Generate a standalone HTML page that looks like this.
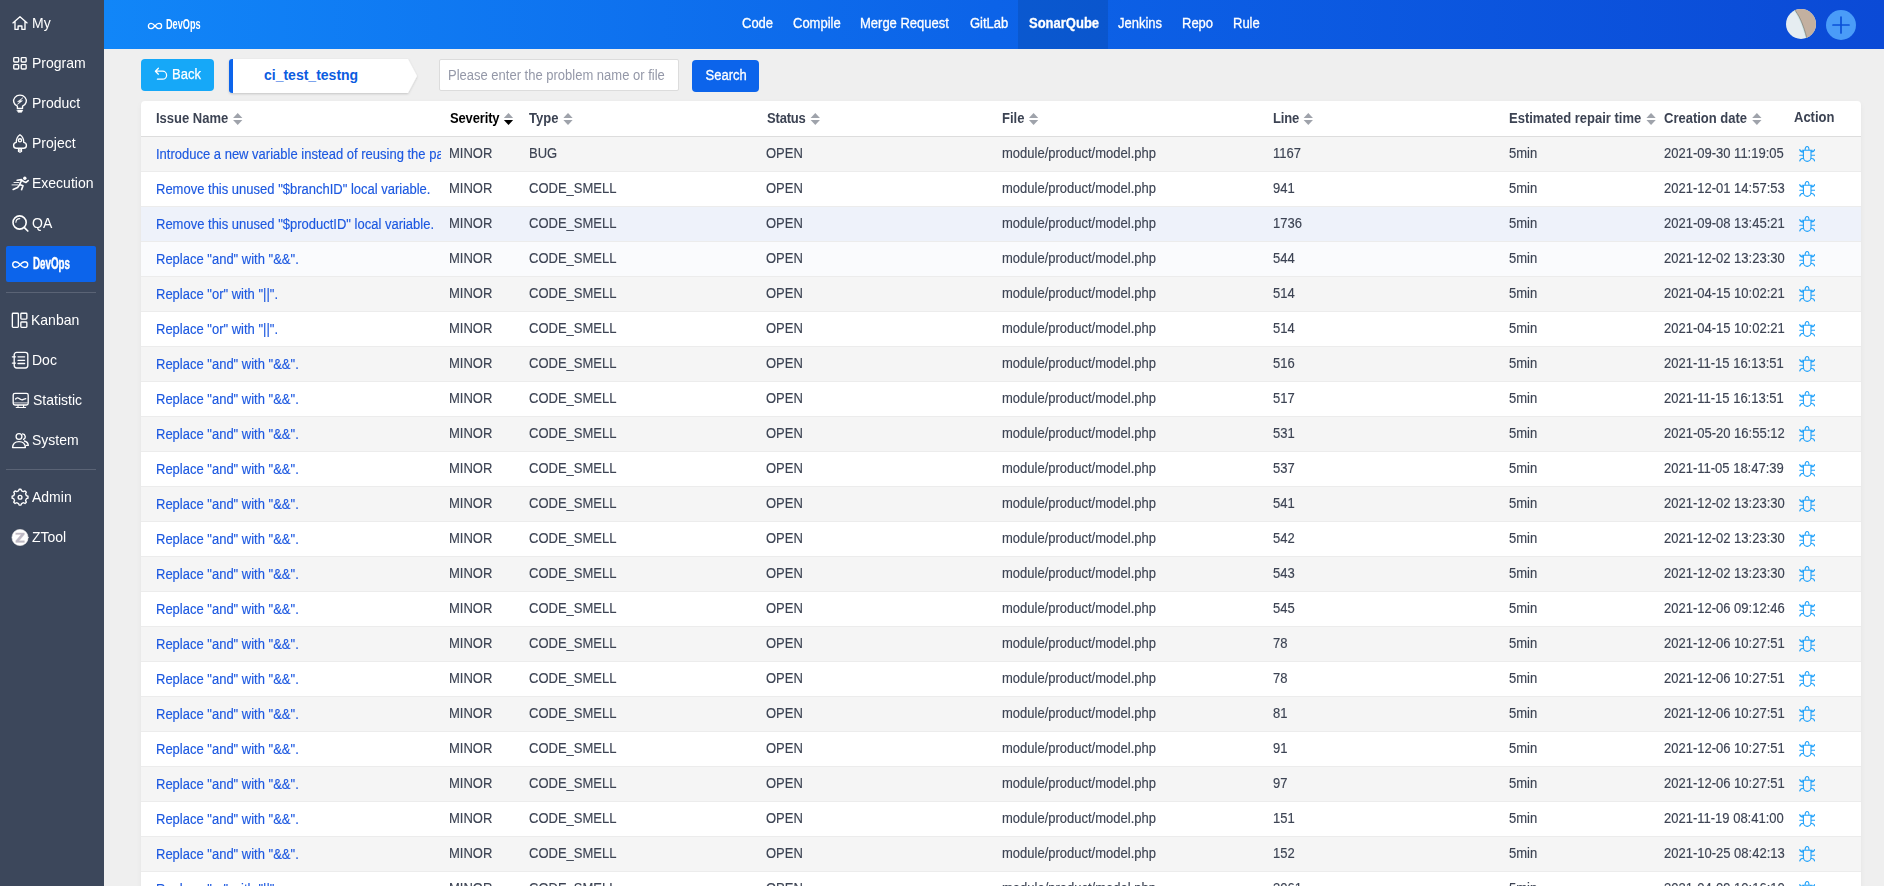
<!DOCTYPE html>
<html><head><meta charset="utf-8"><title>SonarQube issues</title>
<style>
*{box-sizing:border-box;margin:0;padding:0}
html,body{width:1884px;height:886px;overflow:hidden;background:#efefef;font-family:"Liberation Sans",sans-serif;font-size:13px;color:#3c4353}
#side{position:absolute;left:0;top:0;width:104px;height:886px;background:#3c475b}
#side .m{position:absolute;left:6px;width:90px;height:36px;color:#fff;font-size:14px;line-height:36px;border-radius:2px}
#side .m svg{position:absolute;left:5px;top:8px;width:18px;height:20px;fill:none;stroke:#fff;stroke-width:1.35;stroke-linecap:round;stroke-linejoin:round}
#side .m span{position:absolute;left:26px;top:0;white-space:nowrap;font-size:15px;transform:scaleX(.9333);transform-origin:0 50%}
#side .m.act{background:#0c64eb}
#side .dv{position:absolute;left:6px;width:90px;height:1px;background:#5a6375}
#top{position:absolute;left:104px;top:0;width:1780px;height:49px;background:linear-gradient(90deg,#1186f8 0%,#0c63e8 50%,#0b4ad6 100%)}
#top .nav{position:absolute;top:0;height:48px;line-height:47px;color:#fff;font-size:14px;white-space:nowrap;-webkit-text-stroke:0.3px #fff;transform:scaleX(.9286);transform-origin:0 50%}
#top .nav.on{font-weight:bold}
#top .onbg{position:absolute;left:914px;top:0;width:90px;height:49px;background:rgba(0,0,0,0.10)}
.cond{display:inline-block;transform-origin:0 50%;font-weight:bold;-webkit-text-stroke:0}
#back{position:absolute;left:141px;top:59px;width:73px;height:32px;background:#16a8f8;border-radius:4px;color:#fff;font-size:13px;line-height:31px;-webkit-text-stroke:0.25px #fff}
#crumb{position:absolute;left:229px;top:59px;width:190px;height:34px}
#srch{position:absolute;left:439px;top:59px;width:240px;height:32px;background:#fff;border:1px solid #dcdcdc;border-radius:2px;color:#9498a8;font-size:13px;line-height:30px;padding-left:8px}
#sbtn{position:absolute;left:692px;top:60px;width:67px;height:32px;background:#0c64eb;border-radius:4px;color:#fff;font-size:13px;line-height:31px;text-align:center;-webkit-text-stroke:0.3px #fff}
#tbl{position:absolute;left:141px;top:101px;width:1720px;height:800px;background:#fff;border-radius:4px 4px 0 0;overflow:hidden;box-shadow:0 1px 1px rgba(0,0,0,.05),0 2px 6px rgba(0,0,0,.04)}
#th{position:absolute;left:0;top:0;width:1720px;height:36px;border-bottom:1px solid #ddd;font-weight:bold;color:#3c4353;font-size:13px;line-height:35px}
#th span{position:absolute;top:0;white-space:nowrap;font-size:14px;transform:scaleX(.9286);transform-origin:0 50%}
.r{position:absolute;left:0;width:1720px;height:35px;border-bottom:1px solid #ececec;line-height:34px;font-size:13px;color:#3c4353;background:#fff}
.r:nth-child(odd){background:#f5f5f5}
.r.hov{background:#eef2fa}
.r.hov2{background:#fafbfd}
.r span,.r a{position:absolute;top:-1px;white-space:nowrap;-webkit-text-stroke:0.15px;font-size:14px;transform:scaleX(.9286);transform-origin:0 50%}
.c1{left:15px;width:307px;overflow:hidden;color:#1c58e0;top:0 !important}
.c2{left:308px}.c3{left:388px}.c4{left:625px}.c5{left:861px}.c6{left:1132px}.c7{left:1368px}.c8{left:1523px}
.bug{position:absolute;left:1658px;top:8px;width:16px;height:17px;fill:none;stroke:#22a2fa;stroke-width:1.15;stroke-linecap:round}
.sort{display:inline-block;position:relative;width:10.4px;height:12px;margin-left:5.2px;vertical-align:-2px;letter-spacing:0}
.sort:before{content:"";position:absolute;left:0;top:-0.5px;border:5.2px solid transparent;border-top:0;border-bottom:5.5px solid #9fa3ab}
.sort:after{content:"";position:absolute;left:0;top:7px;border:5.2px solid transparent;border-bottom:0;border-top:5.5px solid #9fa3ab}
.sort.dn:after{border-top-color:#000}
</style></head><body>
<svg width="0" height="0" style="position:absolute"><defs>
<g id="bug"><path d="M6.1 4.7 A1.95 3.7 0 0 1 10 4.7 M3.1 4.7 H13.3 M4.4 4.7 V11.7 A3.8 4.1 0 0 0 12 11.7 V4.7 M0.8 4.1 Q1 6.2 4.4 6.6 M0.8 9.7 H4.4 M0.8 15.4 Q1 13.2 4.4 12.8 M15.6 4.1 Q15.4 6.2 12 6.6 M15.6 9.7 H12 M15.6 15.4 Q15.4 13.2 12 12.8"/></g>
</defs></svg>
<div id="side">
<div class="m" style="top:5px"><svg viewBox="0 0 18 20"><path d="M1.9 9.9 L9 3.7 L16.1 9.9 M4 8.4 V16.4 H7.1 V13 H10.9 V16.4 H14 V8.4"/></svg><span style="left:26px">My</span></div>
<div class="m" style="top:45px"><svg viewBox="0 0 18 20"><rect x="2.75" y="4.65" width="4.9" height="4.3" rx="0.8"/><rect x="10.25" y="4.65" width="4.9" height="4.3" rx="0.8"/><rect x="2.75" y="11.65" width="4.9" height="4.3" rx="0.8"/><rect x="10.25" y="11.65" width="4.9" height="4.3" rx="0.8"/></svg><span style="left:26px">Program</span></div>
<div class="m" style="top:85px"><svg viewBox="0 0 18 20"><path d="M6.4 15.4 V13.16 A6.35 5.75 0 1 1 11.54 13.16 V15.4 Z"/><path d="M6.2 17.1 H11.8 L10.6 19.3 H7.4 Z" fill="#fff" stroke-width="0.6"/><path d="M11.7 4.9 L6.5 8.7 H8.9 L6.3 11.5 L11.5 7.7 H9.1 Z" fill="#fff" stroke-width="0.5"/></svg><span style="left:26px">Product</span></div>
<div class="m" style="top:125px"><svg viewBox="0 0 18 20"><path d="M8.97 1.7 C6.4 3.4 5.2 6 5.3 9.3 C3.4 9.6 2.5 11 2.6 12.6 C2.7 14.2 3.8 15.2 5.4 15.2 H12.6 C14.2 15.2 15.3 14.2 15.4 12.6 C15.5 11 14.6 9.6 12.7 9.3 C12.8 6 11.6 3.4 8.97 1.7 Z"/><circle cx="8.97" cy="7.3" r="1.6"/><path d="M7.5 16.4 V18.6 M9 16.4 V19.7 M10.5 16.4 V18.6" stroke-width="1.3"/></svg><span style="left:26px">Project</span></div>
<div class="m" style="top:165px"><svg viewBox="0 0 18 20"><circle cx="13.8" cy="5.3" r="1.7" fill="#fff" stroke="none"/><path d="M6.2 7.3 L10.4 6.6 L12.6 8.6 L15 9.4 L17.2 7.6 M10.8 7 L8.6 11.6 L12 12.8 L10.6 16.6 M8.6 11.8 L6.6 14.4 L2.2 16.4" stroke-width="1.6"/><path d="M3 9.5 H8 M1 11.9 H7" stroke-width="0.9"/></svg><span style="left:26px">Execution</span></div>
<div class="m" style="top:205px"><svg viewBox="0 0 18 20"><circle cx="8.6" cy="9.5" r="6.6" stroke-width="1.6"/><path d="M13.4 14.6 L16.8 18" stroke-width="1.7"/><path d="M4.9 9.2 A3.9 3.9 0 0 1 8.8 5.6" stroke-width="1.1"/></svg><span style="left:26px">QA</span></div>
<div class="m act" style="top:246px"><svg viewBox="0 0 18 20"><path d="M9.2 10.6 C7.4 8.4 6.2 7.7 4.6 7.7 A2.9 2.9 0 0 0 4.6 13.5 C6.2 13.5 7.4 12.8 9.2 10.6 C11 8.4 12.2 7.7 13.8 7.7 A2.9 2.9 0 0 1 13.8 13.5 C12.2 13.5 11 12.8 9.2 10.6 Z" stroke-width="1.4"/></svg><span class="cond" style="left:26.5px;top:0;font-size:17px;transform:scaleX(.575);-webkit-text-stroke:0.5px #fff">DevOps</span></div>
<div class="dv" style="top:292px"></div>
<div class="m" style="top:302px"><svg viewBox="0 0 18 20"><rect x="1.35" y="3.25" width="6" height="14.1" rx="0.8"/><rect x="9.85" y="3.25" width="6" height="5.8" rx="0.8"/><rect x="9.85" y="11.95" width="6" height="5.4" rx="0.8"/></svg><span style="left:25px">Kanban</span></div>
<div class="m" style="top:342px"><svg viewBox="0 0 18 20"><rect x="3.2" y="2.4" width="13.6" height="15.6" rx="2.4"/><path d="M1.4 6.8 H4.4 M1.4 13.1 H4.4 M7 6.8 H13.6 M7 10.3 H13.6 M7 13.5 H13.6"/></svg><span style="left:26px">Doc</span></div>
<div class="m" style="top:382px"><svg viewBox="0 0 18 20"><rect x="2.2" y="3.3" width="15" height="11.7" rx="1.8"/><path d="M3 12.9 H16.4" stroke-width="0.8"/><path d="M4.6 9 C5.6 7.6 6.8 7.4 8.2 8.6 C9.6 9.8 11 10.4 12.4 9.4 L14.8 8.6" stroke-width="1.3"/><path d="M5.2 17.5 H14.6 M7 15.4 V17.2 M12.6 15.4 V17.2" stroke-width="1.1"/></svg><span style="left:27px">Statistic</span></div>
<div class="m" style="top:422px"><svg viewBox="0 0 18 20"><circle cx="8" cy="6.5" r="2.9"/><path d="M1.6 17.6 C1.8 13.6 4.6 11.6 8 11.6 C11.4 11.6 14.2 13.6 14.4 17.6 Z"/><path d="M11.6 3.9 A2.9 2.9 0 0 1 12.6 9.4 M13.4 11 C15.6 11.6 17.2 13.2 17.3 15.4 H15.4"/></svg><span style="left:26px">System</span></div>
<div class="dv" style="top:469px"></div>
<div class="m" style="top:479px"><svg viewBox="0 0 18 20"><circle cx="9.05" cy="10.2" r="1.9"/><path d="M7.53 3.88 L8.11 2.26 L9.99 2.26 L10.57 3.88 L12.45 4.66 L14.00 3.92 L15.33 5.25 L14.59 6.80 L15.37 8.68 L16.99 9.26 L16.99 11.14 L15.37 11.72 L14.59 13.60 L15.33 15.15 L14.00 16.48 L12.45 15.74 L10.57 16.52 L9.99 18.14 L8.11 18.14 L7.53 16.52 L5.65 15.74 L4.10 16.48 L2.77 15.15 L3.51 13.60 L2.73 11.72 L1.11 11.14 L1.11 9.26 L2.73 8.68 L3.51 6.80 L2.77 5.25 L4.10 3.92 L5.65 4.66 Z"/></svg><span style="left:26px">Admin</span></div>
<div class="m" style="top:519px"><svg viewBox="0 0 18 20"><circle cx="9.05" cy="10.5" r="8.1" fill="#fff" stroke="#f4f0ee" stroke-width="0.6"/><path d="M4.9 5.9 H13.4 V7.6 L8.1 13.7 H13.4 V15.4 H4.8 V13.7 L10.1 7.6 H4.9 Z" fill="#bdb9c6" stroke="#cfc6c4" stroke-width="0.4"/></svg><span style="left:26px">ZTool</span></div>
</div>
<div id="top">
<svg style="position:absolute;left:42.7px;top:20px;width:16px;height:12px;fill:none;stroke:#fff;stroke-width:1.3" viewBox="0 0 16 12"><path d="M8 6 C6.6 4.2 5.4 3.4 4 3.4 A2.6 2.6 0 0 0 4 8.6 C5.4 8.6 6.6 7.8 8 6 C9.4 4.2 10.6 3.4 12 3.4 A2.6 2.6 0 0 1 12 8.6 C10.6 8.6 9.4 7.8 8 6 Z"/></svg>
<div style="position:absolute;left:61.5px;top:0;height:48px;line-height:47px;color:#fff;white-space:nowrap"><span class="cond" style="font-size:15px;transform:scaleX(.61)">DevOps</span></div>
<div class="onbg"></div>
<div class="nav" style="left:638px">Code</div>
<div class="nav" style="left:689px">Compile</div>
<div class="nav" style="left:756px">Merge Request</div>
<div class="nav" style="left:866px">GitLab</div>
<div class="nav on" style="left:925px">SonarQube</div>
<div class="nav" style="left:1014px">Jenkins</div>
<div class="nav" style="left:1078px">Repo</div>
<div class="nav" style="left:1129px">Rule</div>
<svg style="position:absolute;left:1682px;top:9px;width:30px;height:30px" viewBox="0 0 30 30"><defs><clipPath id="av"><circle cx="15" cy="15" r="15"/></clipPath></defs><g clip-path="url(#av)"><rect width="30" height="30" fill="#e6edf1"/><path d="M8 0 C12.5 5.5 17 14 21 30 H30 V0 Z" fill="#c3b0a0"/><path d="M7.4 0 C12 5.5 16.4 14 20.4 30" fill="none" stroke="#cfe6e8" stroke-width="1.2"/><path d="M8 0 C12.5 5.5 17 14 21 30" fill="none" stroke="#77726a" stroke-width="0.7"/></g></svg>
<svg style="position:absolute;left:1722px;top:9.5px;width:30px;height:30px" viewBox="0 0 30 30"><circle cx="15" cy="15" r="15" fill="#4a9cf8"/><path d="M15 7 V23 M7 15 H23" stroke="#0b50d8" stroke-width="1.7" stroke-linecap="round" fill="none"/></svg>
</div>
<div id="back"><svg style="position:absolute;left:13px;top:8px;width:14px;height:14px;fill:none;stroke:#fff;stroke-width:1.25;stroke-linecap:round;stroke-linejoin:round" viewBox="0 0 14 14"><path d="M4.4 1.2 L1.4 4.2 L4.4 7.2 M1.6 4.2 H8.6 A4 4 0 0 1 8.6 12.2 H3.4"/></svg><span style="position:absolute;left:30.5px;top:0;font-size:14px;transform:scaleX(.9286);transform-origin:0 50%;white-space:nowrap">Back</span></div>
<div id="crumb"><svg width="192" height="36" viewBox="0 0 192 36" style="position:absolute;left:0;top:0;overflow:visible"><defs><filter id="sh" x="-5%" y="-10%" width="110%" height="140%"><feDropShadow dx="0" dy="1" stdDeviation="0.9" flood-color="#000" flood-opacity="0.18"/></filter></defs><path d="M3 0 H179 L188 17 L179 34 H3 A3 3 0 0 1 0 31 V3 A3 3 0 0 1 3 0 Z" fill="#fff" filter="url(#sh)"/><path d="M3 0 H4 V34 H3 A3 3 0 0 1 0 31 V3 A3 3 0 0 1 3 0 Z" fill="#0c64eb"/></svg><span style="position:absolute;left:35px;top:0;line-height:32px;font-size:14px;font-weight:bold;color:#0c5ce0;white-space:nowrap">ci_test_testng</span></div>
<div id="srch"><span style="position:absolute;left:8px;top:0;font-size:14px;transform:scaleX(.9286);transform-origin:0 50%;white-space:nowrap">Please enter the problem name or file</span></div>
<div id="sbtn"><span style="display:inline-block;position:relative;left:1px;font-size:14px;transform:scaleX(.9286);transform-origin:50% 50%">Search</span></div>
<div id="tbl">
<div id="th"><span style="left:15px">Issue Name<i class="sort"></i></span><span style="left:309px;color:#000;letter-spacing:-0.16px">Severity<i class="sort dn"></i></span><span style="left:388px">Type<i class="sort"></i></span><span style="left:626px;letter-spacing:-0.2px">Status<i class="sort"></i></span><span style="left:861px">File<i class="sort"></i></span><span style="left:1132px;letter-spacing:-0.2px">Line<i class="sort"></i></span><span style="left:1368px">Estimated repair time<i class="sort"></i></span><span style="left:1523px">Creation date<i class="sort"></i></span><span style="left:1653px;top:-1px">Action</span></div>
<div id="rows" style="position:absolute;left:0;top:36px">
<div style="top:0px" class="r"><a class="c1">Introduce a new variable instead of reusing the parameter "$branch".</a><span class="c2">MINOR</span><span class="c3">BUG</span><span class="c4">OPEN</span><span class="c5">module/product/model.php</span><span class="c6">1167</span><span class="c7">5min</span><span class="c8">2021-09-30 11:19:05</span><svg class="bug" viewBox="0 0 16 16"><use href="#bug"/></svg></div>
<div style="top:35px" class="r"><a class="c1">Remove this unused "$branchID" local variable.</a><span class="c2">MINOR</span><span class="c3">CODE_SMELL</span><span class="c4">OPEN</span><span class="c5">module/product/model.php</span><span class="c6">941</span><span class="c7">5min</span><span class="c8">2021-12-01 14:57:53</span><svg class="bug" viewBox="0 0 16 16"><use href="#bug"/></svg></div>
<div style="top:70px" class="r hov"><a class="c1">Remove this unused "$productID" local variable.</a><span class="c2">MINOR</span><span class="c3">CODE_SMELL</span><span class="c4">OPEN</span><span class="c5">module/product/model.php</span><span class="c6">1736</span><span class="c7">5min</span><span class="c8">2021-09-08 13:45:21</span><svg class="bug" viewBox="0 0 16 16"><use href="#bug"/></svg></div>
<div style="top:105px" class="r hov2"><a class="c1">Replace "and" with "&amp;&amp;".</a><span class="c2">MINOR</span><span class="c3">CODE_SMELL</span><span class="c4">OPEN</span><span class="c5">module/product/model.php</span><span class="c6">544</span><span class="c7">5min</span><span class="c8">2021-12-02 13:23:30</span><svg class="bug" viewBox="0 0 16 16"><use href="#bug"/></svg></div>
<div style="top:140px" class="r"><a class="c1">Replace "or" with "||".</a><span class="c2">MINOR</span><span class="c3">CODE_SMELL</span><span class="c4">OPEN</span><span class="c5">module/product/model.php</span><span class="c6">514</span><span class="c7">5min</span><span class="c8">2021-04-15 10:02:21</span><svg class="bug" viewBox="0 0 16 16"><use href="#bug"/></svg></div>
<div style="top:175px" class="r"><a class="c1">Replace "or" with "||".</a><span class="c2">MINOR</span><span class="c3">CODE_SMELL</span><span class="c4">OPEN</span><span class="c5">module/product/model.php</span><span class="c6">514</span><span class="c7">5min</span><span class="c8">2021-04-15 10:02:21</span><svg class="bug" viewBox="0 0 16 16"><use href="#bug"/></svg></div>
<div style="top:210px" class="r"><a class="c1">Replace "and" with "&amp;&amp;".</a><span class="c2">MINOR</span><span class="c3">CODE_SMELL</span><span class="c4">OPEN</span><span class="c5">module/product/model.php</span><span class="c6">516</span><span class="c7">5min</span><span class="c8">2021-11-15 16:13:51</span><svg class="bug" viewBox="0 0 16 16"><use href="#bug"/></svg></div>
<div style="top:245px" class="r"><a class="c1">Replace "and" with "&amp;&amp;".</a><span class="c2">MINOR</span><span class="c3">CODE_SMELL</span><span class="c4">OPEN</span><span class="c5">module/product/model.php</span><span class="c6">517</span><span class="c7">5min</span><span class="c8">2021-11-15 16:13:51</span><svg class="bug" viewBox="0 0 16 16"><use href="#bug"/></svg></div>
<div style="top:280px" class="r"><a class="c1">Replace "and" with "&amp;&amp;".</a><span class="c2">MINOR</span><span class="c3">CODE_SMELL</span><span class="c4">OPEN</span><span class="c5">module/product/model.php</span><span class="c6">531</span><span class="c7">5min</span><span class="c8">2021-05-20 16:55:12</span><svg class="bug" viewBox="0 0 16 16"><use href="#bug"/></svg></div>
<div style="top:315px" class="r"><a class="c1">Replace "and" with "&amp;&amp;".</a><span class="c2">MINOR</span><span class="c3">CODE_SMELL</span><span class="c4">OPEN</span><span class="c5">module/product/model.php</span><span class="c6">537</span><span class="c7">5min</span><span class="c8">2021-11-05 18:47:39</span><svg class="bug" viewBox="0 0 16 16"><use href="#bug"/></svg></div>
<div style="top:350px" class="r"><a class="c1">Replace "and" with "&amp;&amp;".</a><span class="c2">MINOR</span><span class="c3">CODE_SMELL</span><span class="c4">OPEN</span><span class="c5">module/product/model.php</span><span class="c6">541</span><span class="c7">5min</span><span class="c8">2021-12-02 13:23:30</span><svg class="bug" viewBox="0 0 16 16"><use href="#bug"/></svg></div>
<div style="top:385px" class="r"><a class="c1">Replace "and" with "&amp;&amp;".</a><span class="c2">MINOR</span><span class="c3">CODE_SMELL</span><span class="c4">OPEN</span><span class="c5">module/product/model.php</span><span class="c6">542</span><span class="c7">5min</span><span class="c8">2021-12-02 13:23:30</span><svg class="bug" viewBox="0 0 16 16"><use href="#bug"/></svg></div>
<div style="top:420px" class="r"><a class="c1">Replace "and" with "&amp;&amp;".</a><span class="c2">MINOR</span><span class="c3">CODE_SMELL</span><span class="c4">OPEN</span><span class="c5">module/product/model.php</span><span class="c6">543</span><span class="c7">5min</span><span class="c8">2021-12-02 13:23:30</span><svg class="bug" viewBox="0 0 16 16"><use href="#bug"/></svg></div>
<div style="top:455px" class="r"><a class="c1">Replace "and" with "&amp;&amp;".</a><span class="c2">MINOR</span><span class="c3">CODE_SMELL</span><span class="c4">OPEN</span><span class="c5">module/product/model.php</span><span class="c6">545</span><span class="c7">5min</span><span class="c8">2021-12-06 09:12:46</span><svg class="bug" viewBox="0 0 16 16"><use href="#bug"/></svg></div>
<div style="top:490px" class="r"><a class="c1">Replace "and" with "&amp;&amp;".</a><span class="c2">MINOR</span><span class="c3">CODE_SMELL</span><span class="c4">OPEN</span><span class="c5">module/product/model.php</span><span class="c6">78</span><span class="c7">5min</span><span class="c8">2021-12-06 10:27:51</span><svg class="bug" viewBox="0 0 16 16"><use href="#bug"/></svg></div>
<div style="top:525px" class="r"><a class="c1">Replace "and" with "&amp;&amp;".</a><span class="c2">MINOR</span><span class="c3">CODE_SMELL</span><span class="c4">OPEN</span><span class="c5">module/product/model.php</span><span class="c6">78</span><span class="c7">5min</span><span class="c8">2021-12-06 10:27:51</span><svg class="bug" viewBox="0 0 16 16"><use href="#bug"/></svg></div>
<div style="top:560px" class="r"><a class="c1">Replace "and" with "&amp;&amp;".</a><span class="c2">MINOR</span><span class="c3">CODE_SMELL</span><span class="c4">OPEN</span><span class="c5">module/product/model.php</span><span class="c6">81</span><span class="c7">5min</span><span class="c8">2021-12-06 10:27:51</span><svg class="bug" viewBox="0 0 16 16"><use href="#bug"/></svg></div>
<div style="top:595px" class="r"><a class="c1">Replace "and" with "&amp;&amp;".</a><span class="c2">MINOR</span><span class="c3">CODE_SMELL</span><span class="c4">OPEN</span><span class="c5">module/product/model.php</span><span class="c6">91</span><span class="c7">5min</span><span class="c8">2021-12-06 10:27:51</span><svg class="bug" viewBox="0 0 16 16"><use href="#bug"/></svg></div>
<div style="top:630px" class="r"><a class="c1">Replace "and" with "&amp;&amp;".</a><span class="c2">MINOR</span><span class="c3">CODE_SMELL</span><span class="c4">OPEN</span><span class="c5">module/product/model.php</span><span class="c6">97</span><span class="c7">5min</span><span class="c8">2021-12-06 10:27:51</span><svg class="bug" viewBox="0 0 16 16"><use href="#bug"/></svg></div>
<div style="top:665px" class="r"><a class="c1">Replace "and" with "&amp;&amp;".</a><span class="c2">MINOR</span><span class="c3">CODE_SMELL</span><span class="c4">OPEN</span><span class="c5">module/product/model.php</span><span class="c6">151</span><span class="c7">5min</span><span class="c8">2021-11-19 08:41:00</span><svg class="bug" viewBox="0 0 16 16"><use href="#bug"/></svg></div>
<div style="top:700px" class="r"><a class="c1">Replace "and" with "&amp;&amp;".</a><span class="c2">MINOR</span><span class="c3">CODE_SMELL</span><span class="c4">OPEN</span><span class="c5">module/product/model.php</span><span class="c6">152</span><span class="c7">5min</span><span class="c8">2021-10-25 08:42:13</span><svg class="bug" viewBox="0 0 16 16"><use href="#bug"/></svg></div>
<div style="top:735px" class="r"><a class="c1">Replace "or" with "||".</a><span class="c2">MINOR</span><span class="c3">CODE_SMELL</span><span class="c4">OPEN</span><span class="c5">module/product/model.php</span><span class="c6">2061</span><span class="c7">5min</span><span class="c8">2021-04-09 10:16:10</span><svg class="bug" viewBox="0 0 16 16"><use href="#bug"/></svg></div></div></div>
</body></html>
